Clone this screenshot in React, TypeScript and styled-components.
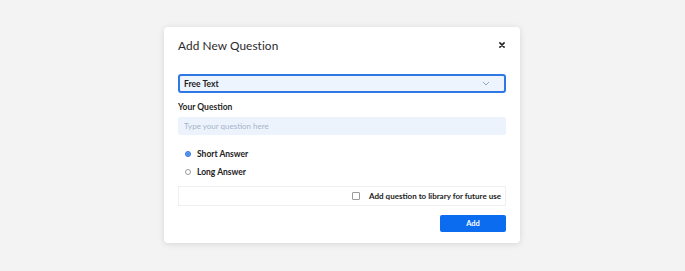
import React, { useState } from "react";
import styled, { createGlobalStyle } from "styled-components";

const GlobalStyle = createGlobalStyle`
  html, body {
    margin: 0;
    padding: 0;
    background: #f3f3f3;
    font-family: "Lato", "Noto Sans", sans-serif;
  }
`;

const Page = styled.div`
  width: 685px;
  height: 271px;
  display: flex;
  padding: 27px 0 0 164px;
  box-sizing: border-box;
`;

const Card = styled.div`
  width: 356px;
  height: 216px;
  box-sizing: border-box;
  background: #fff;
  border-radius: 4px;
  box-shadow: 0 1px 6px rgba(0, 0, 0, 0.12);
  padding: 9px 14px 11px;
  display: flex;
  flex-direction: column;
`;

const Header = styled.div`
  height: 18px;
  display: flex;
  align-items: center;
  justify-content: space-between;
`;

const Title = styled.h2`
  margin: 0;
  font-size: 11.8px;
  font-weight: 400;
  color: #2a2a2a;
  letter-spacing: 0.1px;
`;

const Close = styled.button`
  border: 0;
  background: none;
  padding: 0;
  width: 8px;
  height: 8px;
  display: flex;
  align-items: center;
  justify-content: center;
  color: #222;
`;

const Select = styled.div`
  margin-top: 20px;
  height: 19px;
  box-sizing: border-box;
  border: 2px solid #2f78e3;
  border-radius: 3px;
  background: #eef4fd;
  display: flex;
  align-items: center;
  justify-content: space-between;
  padding: 0 14px 0 4px;
  font-size: 8.5px;
  font-weight: 700;
  color: #1f1f1f;
`;

const Label = styled.div`
  margin-top: 8px;
  height: 12px;
  line-height: 12px;
  font-size: 8.5px;
  font-weight: 700;
  color: #1f1f1f;
`;

const Input = styled.input`
  margin-top: 4px;
  height: 18px;
  box-sizing: border-box;
  border: 0;
  border-radius: 2px;
  background: #edf3fd;
  padding: 0 6px;
  font-family: inherit;
  font-size: 8px;
  color: #333;
  outline: none;
  &::placeholder {
    color: #a4b4c8;
  }
`;

const RadioGroup = styled.div`
  margin-top: 10px;
  padding-left: 7px;
  display: flex;
  flex-direction: column;
`;

const RadioRow = styled.label`
  height: 18px;
  display: flex;
  align-items: center;
  gap: 6px;
  font-size: 8.5px;
  font-weight: 700;
  color: #222;
`;

const RadioDot = styled.span<{ $on: boolean }>`
  width: 6px;
  height: 6px;
  box-sizing: border-box;
  border-radius: 50%;
  border: 1px solid ${(p) => (p.$on ? "#2f78e3" : "#9a9a9a")};
  background: ${(p) => (p.$on ? "#2f78e3" : "#fff")};
  box-shadow: ${(p) => (p.$on ? "inset 0 0 0 1px #7fb0f5" : "none")};
`;

const LibraryRow = styled.div`
  margin-top: 5px;
  height: 20px;
  box-sizing: border-box;
  border: 1px solid #efefef;
  display: flex;
  align-items: center;
  justify-content: flex-end;
  gap: 9px;
  padding-right: 4px;
  font-size: 8px;
  font-weight: 700;
  color: #222;
`;

const Check = styled.span`
  width: 6px;
  height: 6px;
  border: 1px solid #9a9a9a;
  border-radius: 1px;
  background: #fff;
`;

const Footer = styled.div`
  margin-top: 9px;
  display: flex;
  justify-content: flex-end;
`;

const AddButton = styled.button`
  width: 66px;
  height: 17px;
  border: 0;
  border-radius: 2px;
  background: #0b6cf0;
  color: #fff;
  font-family: inherit;
  font-size: 7.5px;
  font-weight: 700;
  padding: 0;
`;

export default function App() {
  const [answer, setAnswer] = useState("short");
  return (
    <Page>
      <GlobalStyle />
      <Card>
        <Header>
          <Title>Add New Question</Title>
          <Close aria-label="close">
            <svg width="6" height="6" viewBox="0 0 10 10">
              <path d="M1.5 1.5 L8.5 8.5 M8.5 1.5 L1.5 8.5" stroke="currentColor" strokeWidth="2.6" strokeLinecap="round" />
            </svg>
          </Close>
        </Header>
        <Select>
          <span>Free Text</span>
          <svg width="8" height="5" viewBox="0 0 8 5">
            <path d="M1 1 L4 4 L7 1" fill="none" stroke="#8fa6c4" strokeWidth="1" />
          </svg>
        </Select>
        <Label>Your Question</Label>
        <Input placeholder="Type your question here" />
        <RadioGroup>
          <RadioRow onClick={() => setAnswer("short")}>
            <RadioDot $on={answer === "short"} />
            Short Answer
          </RadioRow>
          <RadioRow onClick={() => setAnswer("long")}>
            <RadioDot $on={answer === "long"} />
            Long Answer
          </RadioRow>
        </RadioGroup>
        <LibraryRow>
          <Check />
          Add question to library for future use
        </LibraryRow>
        <Footer>
          <AddButton>Add</AddButton>
        </Footer>
      </Card>
    </Page>
  );
}
